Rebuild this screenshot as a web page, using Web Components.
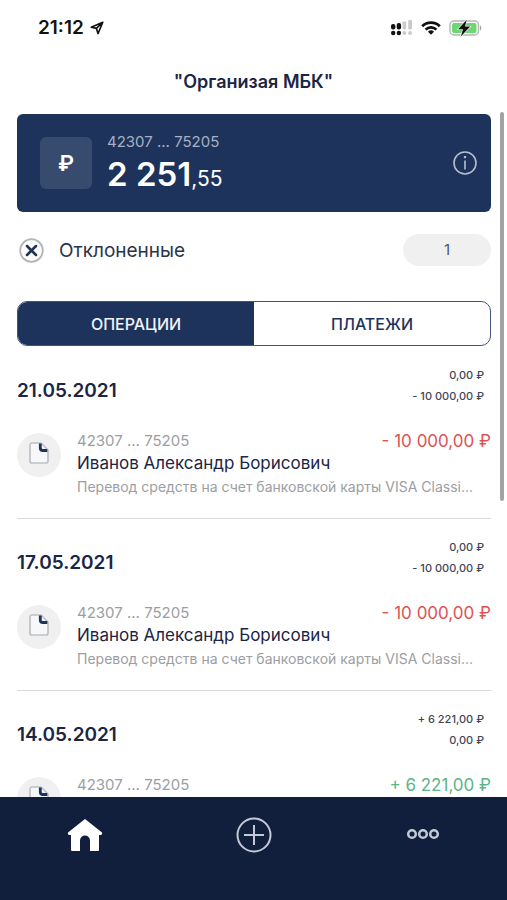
<!DOCTYPE html>
<html lang="ru">
<head>
<meta charset="utf-8">
<meta name="viewport" content="width=device-width, initial-scale=1">
<title>Организая МБК</title>
<style>
  html, body { margin: 0; height: 100%; }
  body { font-family: Inter, "Liberation Sans", sans-serif; background: #fff; color: #1b2545;
    --navy: #1e335b; --deep: #121f3c; --ink: #1b2545; --muted: #9b9ea3; --line: #d9dadc; --soft: #f0f0f0; }
</style>
</head>
<body>
<bank-app>
  <status-bar slot="top" time="21:12"></status-bar>
  <page-title slot="top">"Организая МБК"</page-title>
  <account-card number="42307 ... 75205" whole="2 251" cents=",55"></account-card>
  <rejected-row count="1">Отклоненные</rejected-row>
  <segment-switch></segment-switch>
  <day-group date="21.05.2021" income="0,00 ₽" outcome="- 10 000,00 ₽">
    <operation-row account="42307 ... 75205" amount="- 10 000,00 ₽">Иванов Александр Борисович<span slot="note">Перевод средств на счет банковской карты VISA Classi...</span></operation-row>
  </day-group>
  <day-group date="17.05.2021" income="0,00 ₽" outcome="- 10 000,00 ₽">
    <operation-row account="42307 ... 75205" amount="- 10 000,00 ₽">Иванов Александр Борисович<span slot="note">Перевод средств на счет банковской карты VISA Classi...</span></operation-row>
  </day-group>
  <day-group date="14.05.2021" income="+ 6 221,00 ₽" outcome="0,00 ₽">
    <operation-row account="42307 ... 75205" amount="+ 6 221,00 ₽" kind="in"></operation-row>
  </day-group>
  <tab-bar slot="bottom"></tab-bar>
</bank-app>

<script>
class Base extends HTMLElement {
  connectedCallback() {
    if (this.shadowRoot) return;
    this.attachShadow({ mode: "open" }).innerHTML =
      `<style>:host,*{box-sizing:border-box}button{font:inherit;color:inherit;border:0;padding:0;background:none;cursor:pointer}svg{display:block}${this.css()}</style>${this.html()}`;
  }
  a(name) { return this.getAttribute(name) || ""; }
}

customElements.define("bank-app", class extends Base {
  css() { return `
    :host{display:flex;flex-direction:column;height:100vh;overflow:hidden}
    main{flex:1;min-height:0;overflow:hidden;padding:4px 16px 0 17px;position:relative}
    .thumb{position:absolute;top:2px;right:3px;width:4px;height:389px;border-radius:2px;background:#a3a3a3}`; }
  html() { return `<slot name="top"></slot><main><slot></slot><div class="thumb"></div></main><slot name="bottom"></slot>`; }
});

customElements.define("status-bar", class extends Base {
  css() { return `
    :host{display:flex;justify-content:space-between;align-items:center;height:56px;padding:0 25px 0 38px;color:#111}
    div{display:flex;align-items:center}
    .time{gap:6px;font-size:19px;line-height:24px;font-weight:600}
    .state{gap:8px}`; }
  html() { return `
    <div class="time"><span>${this.a("time")}</span>
      <svg width="14" height="14" viewBox="0 0 14 14" fill="none" stroke="#111" stroke-width="1.6" stroke-linejoin="round"><path d="M12.8 1.2 1.2 6.2l5.2 1.2 1.6 5.2zM6.4 7.4l6.4-6.2"/></svg></div>
    <div class="state">
      <svg width="22" height="16" viewBox="0 0 22 16"><g fill="#111"><rect x="0" y="4" width="4.4" height="5.4" rx="2"/><rect x="5.7" y="3" width="4.4" height="6.4" rx="2"/><circle cx="2.2" cy="13" r="2.2"/><circle cx="7.9" cy="13" r="2.2"/></g><g fill="#cbcbcb"><rect x="11.6" y="1.5" width="3.6" height="8" rx="1"/><rect x="17.2" y="0" width="3.8" height="9.4" rx="1"/><circle cx="13.4" cy="13" r="2"/><circle cx="19.1" cy="13" r="2"/></g></svg>
      <svg width="20" height="16" viewBox="0 0 20 16" fill="none" stroke="#111" stroke-width="2.7"><path d="M1.2 6.2a12.4 12.4 0 0 1 17.6 0M4.6 9.6a7.6 7.6 0 0 1 10.8 0"/><path d="M10 14.8 7 11.7a4.3 4.3 0 0 1 6 0z" fill="#111" stroke="none"/></svg>
      <svg width="33" height="18" viewBox="0 0 33 18"><rect x="1" y="2" width="28.5" height="14" rx="4" fill="#fff" stroke="#b5b5b5" stroke-width="1.4"/><rect x="3" y="4" width="24.5" height="10" rx="2" fill="#6bd873"/><path d="M31 6.5c1.8.6 1.8 4.4 0 5z" fill="#a6a6a6"/><path d="M17.8.8 9 10.200h5l-2.200 7.200L21.200 7.600h-5.200z" fill="#111" stroke="#fff" stroke-width="1.2" paint-order="stroke"/></svg>
    </div>`; }
});

customElements.define("page-title", class extends Base {
  css() { return `:host{display:block}h1{margin:0;padding:14px 0 16px;font-size:18px;line-height:24px;font-weight:600;text-align:center}`; }
  html() { return `<h1><slot></slot></h1>`; }
});

customElements.define("account-card", class extends Base {
  css() { return `
    :host{display:flex;align-items:center;min-height:98px;padding:0 14px 0 23px;border-radius:6px;background:var(--navy);color:#fff}
    .sign{width:52px;height:52px;border-radius:6px;background:#364b6e;font-size:22px;font-weight:600;display:grid;place-items:center}
    .text{flex:1;padding:8px 0 0 15px}
    .num{font-size:15px;line-height:18px;color:#a5b0c4}
    .sum{font-size:21px;line-height:46px}
    .sum b{font-size:33px;font-weight:600}`; }
  html() { return `<div class="sign">₽</div>
    <div class="text"><div class="num">${this.a("number")}</div><div class="sum"><b>${this.a("whole")}</b>${this.a("cents")}</div></div>
    <button aria-label="Информация"><svg width="24" height="24" viewBox="0 0 24 24" fill="none" stroke="#b4bfd1" stroke-width="1.6"><circle cx="12" cy="12" r="11"/><path d="M12 9.6V18.6"/><path d="M12 5v2.2" stroke-width="2.2"/></svg></button>`; }
});

customElements.define("rejected-row", class extends Base {
  css() { return `
    :host{display:flex;align-items:center;height:32px;margin-top:22px;padding-left:2px;font-size:19px;line-height:24px;color:#2b3447}
    .label{flex:1;padding:2px 0 0 15px}
    .count{width:88px;height:32px;border-radius:16px;background:var(--soft);display:grid;place-items:center;font-size:15px;color:#4d5883}`; }
  html() { return `<svg width="25" height="25" viewBox="0 0 25 25" fill="none"><circle cx="12.5" cy="12.5" r="11.3" fill="#fcfcfc" stroke="#b3b5b9" stroke-width="1.8"/><path d="m8 8 9 9m0-9-9 9" stroke="#1e335b" stroke-width="2.5" stroke-linecap="round"/></svg>
    <span class="label"><slot></slot></span><span class="count">${this.a("count")}</span>`; }
});

customElements.define("segment-switch", class extends Base {
  css() { return `
    :host{display:flex;height:45px;margin:35px 0 1px;border:1px solid #40547d;border-radius:10px;overflow:hidden}
    button{flex:1;font-size:16px;line-height:20px;font-weight:500;color:var(--navy)}
    button[aria-pressed=true]{background:var(--navy);color:#f0f3f8}`; }
  html() { return `<button aria-pressed="true">ОПЕРАЦИИ</button><button aria-pressed="false">ПЛАТЕЖИ</button>`; }
});

customElements.define("day-group", class extends Base {
  css() { return `
    :host{display:block;padding:18px 0;border-bottom:1px solid var(--line)}
    header{display:flex;justify-content:space-between;align-items:flex-end;padding-right:7px}
    h2{margin:0;font-size:19px;line-height:32px;font-weight:600}
    .sums{font-size:11px;line-height:21px;font-weight:500;text-align:right;color:#414659}`; }
  html() { return `<header><h2>${this.a("date")}</h2><div class="sums"><div>${this.a("income")}</div><div>${this.a("outcome")}</div></div></header><slot></slot>`; }
});

customElements.define("operation-row", class extends Base {
  css() { return `
    :host{display:flex;gap:16px;padding-top:23px}
    .icon{flex:none;width:44px;height:44px;margin-top:3px;border-radius:50%;background:var(--soft);display:grid;place-items:center;padding-bottom:4px}
    .body{flex:1;min-width:0}
    .top{display:flex;justify-content:space-between;line-height:22px}
    .acc{font-size:15px;color:var(--muted)}
    .amount{font-size:17px;color:#e05252}
    :host([kind=in]) .amount{color:#5bb585}
    .name{font-size:17px;line-height:22px;min-height:22px}
    .note{font-size:14px;line-height:26px;min-height:26px;color:var(--muted);white-space:nowrap;overflow:hidden;text-overflow:ellipsis}`; }
  html() { return `<div class="icon"><svg width="20" height="22" viewBox="0 0 20 22" fill="none"><path d="M3 1h9l7 7v11a2 2 0 0 1-2 2H3a2 2 0 0 1-2-2V3a2 2 0 0 1 2-2z" fill="#f7f8fa" stroke="#bfc1c7" stroke-width="1.7"/><path d="M11.3 1.6V6a2.500 2.500 0 0 0 2.500 2.500H18.300" stroke="#1e335b" stroke-width="2.8"/></svg></div>
    <div class="body"><div class="top"><span class="acc">${this.a("account")}</span><span class="amount">${this.a("amount")}</span></div>
    <div class="name"><slot></slot></div><div class="note"><slot name="note"></slot></div></div>`; }
});

customElements.define("tab-bar", class extends Base {
  css() { return `
    :host{display:block;flex:none;background:var(--deep)}
    nav{display:grid;grid-template-columns:repeat(3,1fr);height:103px;padding-top:19px;align-items:start}
    a,button{display:grid;place-items:center;height:38px}`; }
  html() { return `<nav>
    <a href="#home" aria-label="Главная"><svg width="36" height="34" viewBox="0 0 36 34"><path d="M18 1 35 14.500Q35.500 17 33.500 17H32V32Q32 33 31 33H23V22.500a5 5 0 0 0-10 0V33H5Q4 33 4 32V17H2.500Q.500 17 1 14.500z" fill="#fff"/></svg></a>
    <button aria-label="Создать"><svg width="36" height="36" viewBox="0 0 36 36" fill="none" stroke="#c3cad6" stroke-width="2"><circle cx="18" cy="18" r="16.500"/><path d="M18 8v20M8 18h20"/></svg></button>
    <button aria-label="Ещё"><svg width="34" height="12" viewBox="0 0 34 12" fill="none" stroke="#c3cad6" stroke-width="2.500"><circle cx="6" cy="5" r="3.800"/><circle cx="17" cy="5" r="3.800"/><circle cx="28" cy="5" r="3.800"/></svg></button>
  </nav>`; }
});
</script>
</body>
</html>
